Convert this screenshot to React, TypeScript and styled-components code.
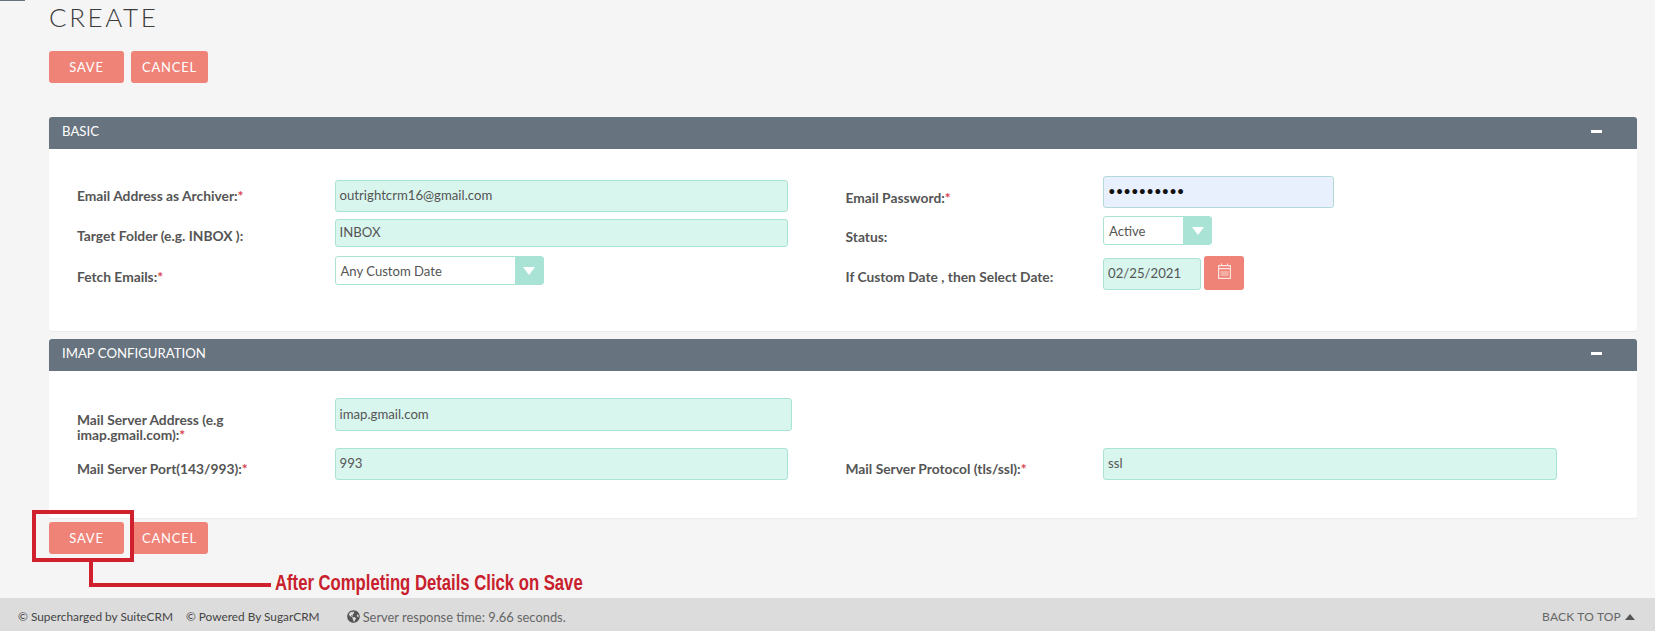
import * as React from "react";
import styled, { createGlobalStyle } from "styled-components";
import { FaGlobeAmericas } from "react-icons/fa";

const Global = createGlobalStyle`
  html, body {
    margin: 0;
    padding: 0;
    background: #f5f5f5;
  }
`;

const Page = styled.div`
  position: relative;
  width: 1655px;
  height: 631px;
  overflow: hidden;
  display: flex;
  flex-direction: column;
  background: #f5f5f5;
  font-family: Lato, "Open Sans", sans-serif;
`;

const TopMark = styled.div`
  position: absolute;
  left: 0;
  top: 0;
  width: 25px;
  height: 1px;
  background: #67737e;
`;

const Content = styled.div`
  padding: 0 18px 0 49px;
  display: flex;
  flex-direction: column;
`;

const Title = styled.h2`
  margin: 2px 0 0;
  font-size: 26px;
  line-height: 31px;
  font-weight: 300;
  letter-spacing: 2.6px;
  color: #3c3c3c;
`;

const Buttons = styled.div<{ $top: number }>`
  display: flex;
  gap: 7px;
  margin-top: ${(p) => p.$top}px;
`;

const Button = styled.div<{ $w: number }>`
  width: ${(p) => p.$w}px;
  height: 32px;
  border-radius: 3px;
  background: #f08377;
  color: #fff;
  font-size: 13px;
  letter-spacing: 0.8px;
  display: flex;
  align-items: center;
  justify-content: center;
`;

const Panel = styled.section<{ $top: number; $h: number }>`
  margin-top: ${(p) => p.$top}px;
  height: ${(p) => p.$h}px;
  background: #fff;
  border-radius: 3px;
  box-shadow: 0 1px 1px rgba(0, 0, 0, 0.04);
  display: flex;
  flex-direction: column;
`;

const PanelHead = styled.div`
  flex: none;
  box-sizing: border-box;
  height: 32px;
  padding: 0 35px 4px 13px;
  background: #67737e;
  border-radius: 3px 3px 0 0;
  color: #fff;
  font-size: 13.2px;
  display: flex;
  align-items: center;
  justify-content: space-between;
`;

const Collapse = styled.span`
  width: 11px;
  height: 3px;
  background: #fff;
`;

const Columns = styled.div<{ $pad: number }>`
  padding: ${(p) => p.$pad}px 0 0 28px;
  display: grid;
  grid-template-columns: 768.5px 1fr;
`;

const Column = styled.div`
  display: flex;
  flex-direction: column;
`;

const Row = styled.div<{ $h: number }>`
  height: ${(p) => p.$h}px;
  display: grid;
  grid-template-columns: 257.5px 1fr;
  align-items: center;
`;

const Label = styled.div`
  padding-bottom: 2px;
  color: #555;
  font-size: 13.8px;
  line-height: 15px;
  font-weight: 700;
`;

const Req = styled.span`
  color: #d9434e;
`;

const Field = styled.div<{ $w: number; $h: number; $lift?: number; $pass?: boolean }>`
  box-sizing: border-box;
  width: ${(p) => p.$w}px;
  height: ${(p) => p.$h}px;
  margin-bottom: ${(p) => (p.$lift || 0) * 2}px;
  padding: 0 5px 2px 4px;
  background: ${(p) => (p.$pass ? "#e8f0fe" : "#d8f5ee")};
  border: 1px solid ${(p) => (p.$pass ? "#b4dad8" : "#a9e3d5")};
  border-radius: 3px;
  color: ${(p) => (p.$pass ? "#111" : "#555")};
  font-size: 13.2px;
  display: flex;
  align-items: center;
`;

const Select = styled.div<{ $w: number; $lift: number }>`
  box-sizing: border-box;
  width: ${(p) => p.$w}px;
  height: 29px;
  margin-bottom: ${(p) => p.$lift * 2}px;
  background: #fff;
  border: 1px solid #a9e3d5;
  border-radius: 3px;
  color: #555;
  font-size: 13.1px;
  display: flex;
  align-items: center;
  justify-content: space-between;
  padding-left: 5px;
`;

const Arrow = styled.span`
  align-self: stretch;
  width: 29px;
  margin-right: -1px;
  background: #a9e3d5;
  border-radius: 0 3px 3px 0;
  display: flex;
  align-items: center;
  justify-content: center;

  &::after {
    content: "";
    border-style: solid;
    border-width: 8px 6.5px 0;
    border-color: #fff transparent transparent;
  }
`;

const DateGroup = styled.div`
  display: flex;
  align-items: center;
  gap: 3px;
`;

const IconButton = styled.div`
  box-sizing: border-box;
  width: 40px;
  height: 34px;
  margin-bottom: 9px;
  padding-bottom: 5px;
  border-radius: 3px;
  background: #f08377;
  color: #fbe3df;
  display: flex;
  align-items: center;
  justify-content: center;
`;

const Footer = styled.footer`
  box-sizing: border-box;
  margin-top: auto;
  height: 33px;
  padding: 4px 20px 0 18px;
  background: #dcdcdc;
  color: #444;
  font-size: 11.85px;
  display: flex;
  align-items: center;
`;

const Powered = styled.span`
  margin-left: 13px;
`;

const Response = styled.span`
  margin-left: 27px;
  color: #666;
  font-size: 12.9px;
  display: flex;
  align-items: center;
  gap: 3px;

  svg {
    color: #555;
  }
`;

const BackToTop = styled.span`
  margin-left: auto;
  color: #666;
  font-size: 12px;
  letter-spacing: 0.2px;
  display: flex;
  align-items: center;
  gap: 4px;

  &::after {
    content: "";
    border-style: solid;
    border-width: 0 5.5px 6px;
    border-color: transparent transparent #555;
  }
`;

const RedBox = styled.div`
  position: absolute;
  left: 32px;
  top: 510px;
  width: 102px;
  height: 52px;
  box-sizing: border-box;
  border: 4px solid #d0202e;
`;

const Connector = styled.svg`
  position: absolute;
  left: 86px;
  top: 560px;
`;

const Note = styled.div`
  position: absolute;
  left: 275px;
  top: 570px;
  color: #c8202c;
  font-family: "Liberation Sans", sans-serif;
  font-size: 22px;
  line-height: 26px;
  font-weight: 700;
  white-space: nowrap;
  transform: scaleX(0.758);
  transform-origin: left center;
`;

const SaveCancel = ({ top }: { top: number }) => (
  <Buttons $top={top}>
    <Button $w={75}>SAVE</Button>
    <Button $w={77}>CANCEL</Button>
  </Buttons>
);

const CalendarIcon = () => (
  <svg width="13" height="16" viewBox="0 0 13 16" fill="none" stroke="currentColor" strokeWidth="1.2">
    <rect x="0.6" y="2.6" width="11.8" height="12.8" />
    <path d="M3.5 0.5V3M9.5 0.5V3M0.6 5.6H12.4" />
    <rect x="2.5" y="8" width="8" height="5" fill="currentColor" opacity="0.45" stroke="none" />
  </svg>
);

export default function App() {
  return (
    <Page>
      <Global />
      <TopMark />
      <Content>
        <Title>CREATE</Title>
        <SaveCancel top={18} />
        <Panel $top={34} $h={214}>
          <PanelHead>
            BASIC
            <Collapse />
          </PanelHead>
          <Columns $pad={27}>
            <Column>
              <Row $h={40}>
                <Label>Email Address as Archiver:<Req>*</Req></Label>
                <Field $w={453} $h={32}>outrightcrm16@gmail.com</Field>
              </Row>
              <Row $h={40}>
                <Label>Target Folder (e.g. INBOX ):</Label>
                <Field $w={453} $h={28} $lift={3}>INBOX</Field>
              </Row>
              <Row $h={40}>
                <Label>Fetch Emails:<Req>*</Req></Label>
                <Select $w={209} $lift={7}>
                  Any Custom Date
                  <Arrow />
                </Select>
              </Row>
            </Column>
            <Column>
              <Row $h={40}>
                <Label>Email Password:<Req>*</Req></Label>
                <Field $w={231} $h={32} $lift={6} $pass>••••••••••</Field>
              </Row>
              <Row $h={40}>
                <Label>Status:</Label>
                <Select $w={109} $lift={7}>
                  Active
                  <Arrow />
                </Select>
              </Row>
              <Row $h={40}>
                <Label>If Custom Date , then Select Date:</Label>
                <DateGroup>
                  <Field $w={98} $h={32} $lift={4}>02/25/2021</Field>
                  <IconButton>
                    <CalendarIcon />
                  </IconButton>
                </DateGroup>
              </Row>
            </Column>
          </Columns>
        </Panel>
        <Panel $top={8} $h={179}>
          <PanelHead>
            IMAP CONFIGURATION
            <Collapse />
          </PanelHead>
          <Columns $pad={27}>
            <Column>
              <Row $h={50}>
                <Label>Mail Server Address (e.g<br />imap.gmail.com):<Req>*</Req></Label>
                <Field $w={457} $h={33} $lift={13}>imap.gmail.com</Field>
              </Row>
              <Row $h={35}>
                <Label>Mail Server Port(143/993):<Req>*</Req></Label>
                <Field $w={453} $h={32} $lift={5}>993</Field>
              </Row>
            </Column>
            <Column>
              <Row $h={50} />
              <Row $h={35}>
                <Label>Mail Server Protocol (tls/ssl):<Req>*</Req></Label>
                <Field $w={454} $h={32} $lift={5}>ssl</Field>
              </Row>
            </Column>
          </Columns>
        </Panel>
        <SaveCancel top={4} />
      </Content>
      <Footer>
        © Supercharged by SuiteCRM
        <Powered>© Powered By SugarCRM</Powered>
        <Response>
          <FaGlobeAmericas size={13} />
          Server response time: 9.66 seconds.
        </Response>
        <BackToTop>BACK TO TOP</BackToTop>
      </Footer>
      <RedBox />
      <Connector width="186" height="30" viewBox="0 0 186 30">
        <path d="M5 0V25H185" fill="none" stroke="#d0202e" strokeWidth="4" />
      </Connector>
      <Note>After Completing Details Click on Save</Note>
    </Page>
  );
}
